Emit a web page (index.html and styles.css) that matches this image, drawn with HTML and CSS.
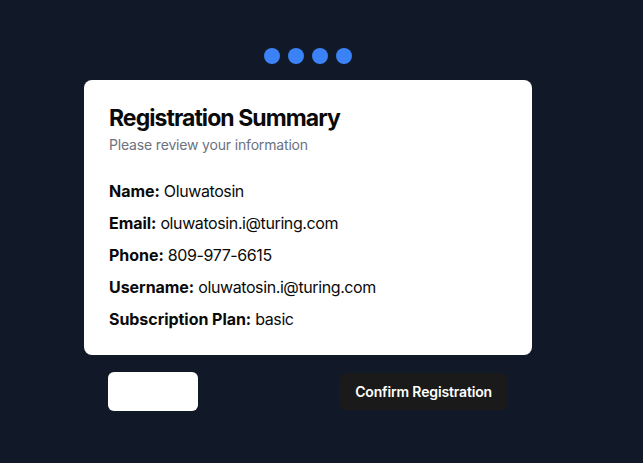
FILE: index.html
```html
<!DOCTYPE html>
<html lang="en">
<head>
<meta charset="utf-8">
<link rel="stylesheet" href="styles.css">
</head>
<body>
<main class="wrap">
  <div class="steps">
    <span class="dot"></span><span class="dot"></span><span class="dot"></span><span class="dot"></span>
  </div>
  <section class="card">
    <h1 class="title">Registration Summary</h1>
    <p class="subtitle">Please review your information</p>
    <div class="rows">
      <p class="row"><strong>Name:</strong> Oluwatosin</p>
      <p class="row"><strong>Email:</strong> oluwatosin.i@turing.com</p>
      <p class="row"><strong>Phone:</strong> 809-977-6615</p>
      <p class="row"><strong>Username:</strong> oluwatosin.i@turing.com</p>
      <p class="row"><strong>Subscription Plan:</strong> basic</p>
    </div>
  </section>
  <div class="actions">
    <button class="btn btn-back" type="button"></button>
    <button class="btn btn-confirm" type="button">Confirm Registration</button>
  </div>
</main>
</body>
</html>
```
FILE: styles.css
```css
* { box-sizing: border-box; }
html, body { margin: 0; padding: 0; }
body {
  background: #111827;
  font-family: Inter, "Liberation Sans", sans-serif;
  color: #0a0a0a;
  min-height: 463px;
}
.wrap {
  width: 448px;
  margin-left: 84px;
  padding-top: 48px;
}
.steps {
  display: flex;
  justify-content: center;
  gap: 8px;
  margin-bottom: 16px;
}
.dot {
  width: 16px;
  height: 16px;
  border-radius: 50%;
  background: #3b82f6;
}
.card {
  background: #fff;
  border-radius: 8px;
  padding: 24px 24px 24px 25px;
}
.title {
  margin: 0;
  font-size: 23px;
  line-height: 28px;
  font-weight: 700;
  letter-spacing: -0.95px;
}
.subtitle {
  margin: 3px 0 0;
  font-size: 14px;
  line-height: 20px;
  color: #6b7280;
  letter-spacing: -0.17px;
}
.rows {
  margin-top: 24px;
  display: flex;
  flex-direction: column;
  gap: 8px;
}
.row {
  margin: 0;
  font-size: 16px;
  line-height: 24px;
  letter-spacing: -0.4px;
}
.row strong {
  font-weight: 700;
  letter-spacing: -0.05px;
}
.actions {
  display: flex;
  justify-content: space-between;
  align-items: center;
  padding: 0 24px;
  margin-top: 17px;
}
.btn {
  font-family: inherit;
  border: none;
  border-radius: 6px;
  cursor: pointer;
}
.btn-back {
  width: 90px;
  height: 39px;
  background: #fff;
}
.btn-confirm {
  height: 37px;
  padding: 0 16px;
  background: #1a1a1a;
  color: #fff;
  font-size: 14px;
  font-weight: 600;
  letter-spacing: -0.15px;
}
```
